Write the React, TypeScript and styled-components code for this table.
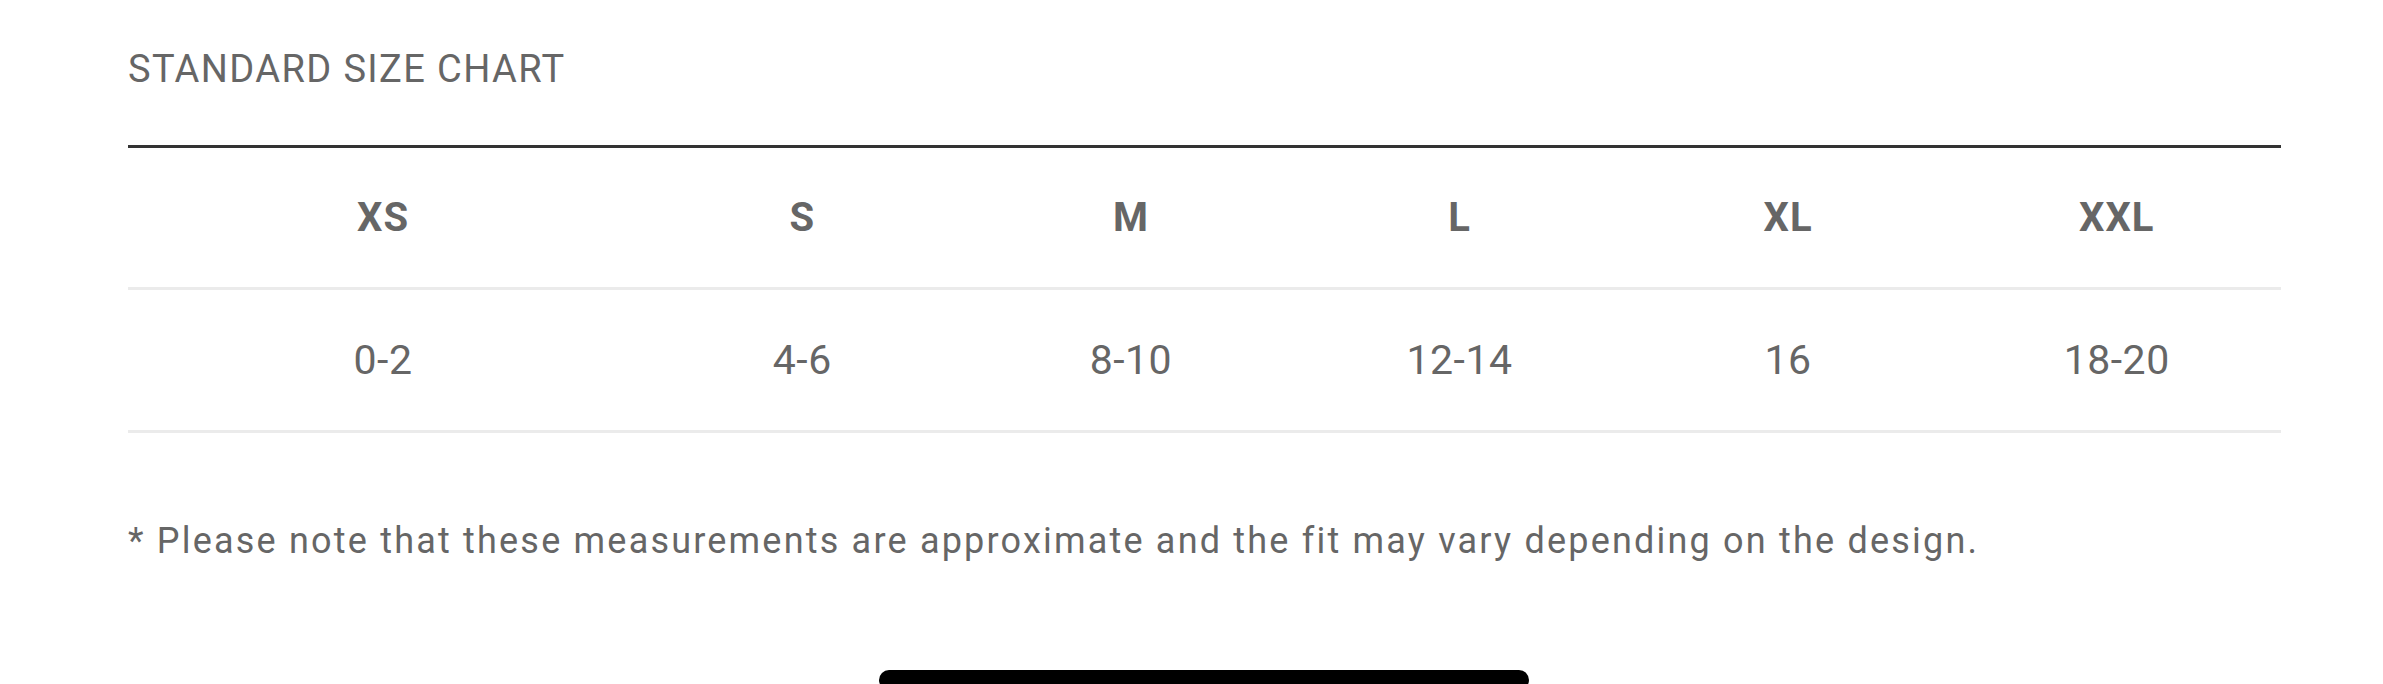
import styled, { createGlobalStyle } from "styled-components";

const GlobalStyle = createGlobalStyle`
  html, body {
    margin: 0;
    padding: 0;
    background: #fff;
    overflow: hidden;
  }
  body {
    font-family: Roboto, "Noto Sans", Arial, sans-serif;
    color: #666;
  }
`;

const Page = styled.div`
  height: 684px;
  display: flex;
  flex-direction: column;
  overflow: hidden;
`;

const Section = styled.section`
  padding: 46px 102px 0 128px;
`;

const Title = styled.h2`
  margin: 0;
  font-size: 38px;
  line-height: 46px;
  font-weight: 400;
  letter-spacing: 1.4px;
  color: #666;
  text-transform: uppercase;
`;

const Chart = styled.div`
  margin-top: 53px;
  border-top: 3px solid #333;
`;

const Row = styled.div<{ $h: number }>`
  display: grid;
  grid-template-columns: 510px repeat(5, 1fr);
  align-items: center;
  height: ${(p) => p.$h}px;
  border-bottom: 3px solid #ebebeb;
`;

const Cell = styled.div<{ $bold?: boolean }>`
  text-align: center;
  font-size: ${(p) => (p.$bold ? 40 : 41)}px;
  letter-spacing: ${(p) => (p.$bold ? 1 : 0.5)}px;
  line-height: 46px;
  font-weight: ${(p) => (p.$bold ? 700 : 400)};
  color: #666;
`;

const Note = styled.p`
  margin: 82px 0 0;
  font-size: 36px;
  line-height: 52px;
  letter-spacing: 2.2px;
  color: #666;
  white-space: nowrap;
`;

const HomeBar = styled.div`
  margin: 103px auto 0;
  width: 650px;
  height: 20px;
  flex-shrink: 0;
  border-radius: 10px;
  background: #000;
  transform: translateX(12px);
`;

const sizes = ["XS", "S", "M", "L", "XL", "XXL"];
const numbers = ["0-2", "4-6", "8-10", "12-14", "16", "18-20"];

export default function App() {
  return (
    <Page>
      <GlobalStyle />
      <Section>
        <Title>Standard Size Chart</Title>
        <Chart>
          <Row $h={139}>
            {sizes.map((s) => (
              <Cell key={s} $bold>
                {s}
              </Cell>
            ))}
          </Row>
          <Row $h={140}>
            {numbers.map((n) => (
              <Cell key={n}>{n}</Cell>
            ))}
          </Row>
        </Chart>
        <Note>
          * Please note that these measurements are approximate and the fit may
          vary depending on the design.
        </Note>
      </Section>
      <HomeBar />
    </Page>
  );
}
